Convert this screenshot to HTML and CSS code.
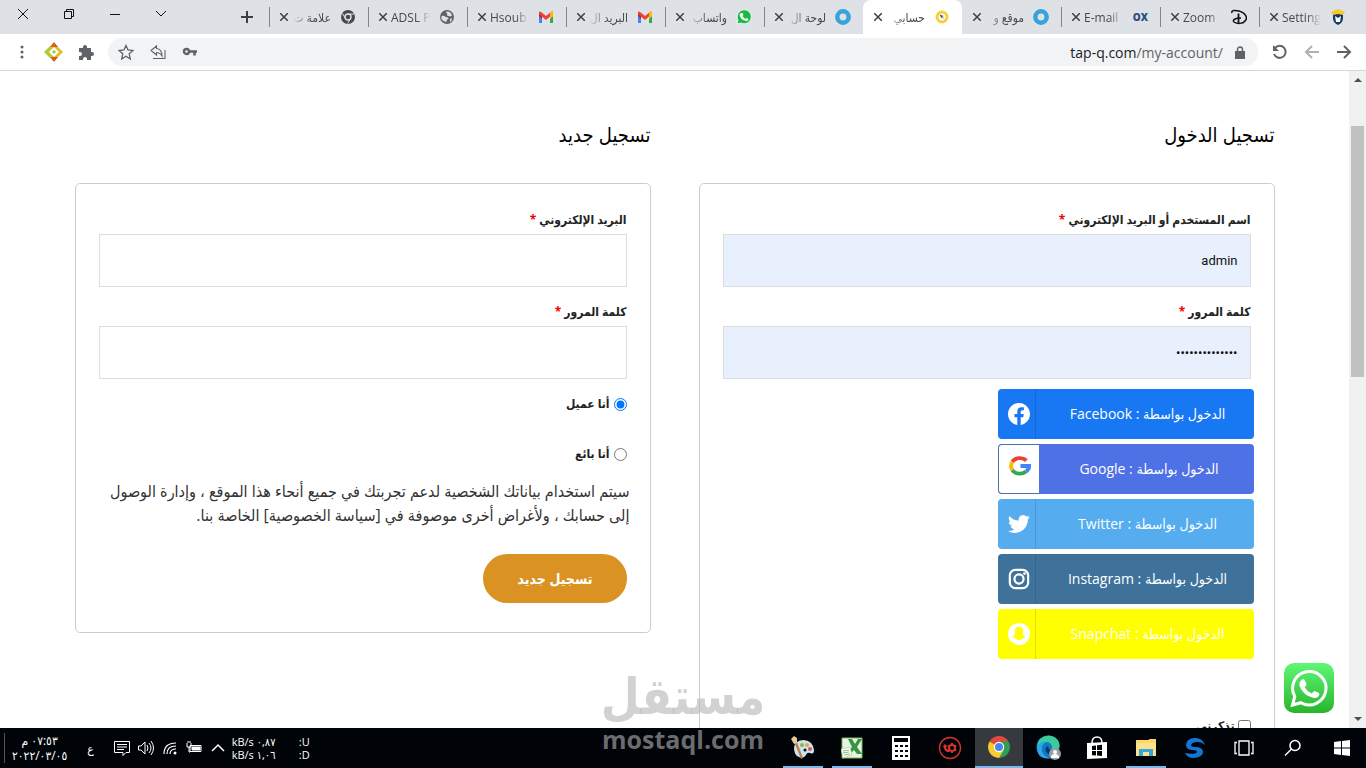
FILE: index.html
```html
<!DOCTYPE html>
<html lang="ar" dir="rtl">
  <head>
    <meta charset="utf-8">
    <title>حسابي</title>
    <link rel="stylesheet" href="styles.css">
  </head>
  <body>
    <div class="tabs">
      <div class="tab">
        <svg class="favicon" viewBox="0 0 16 16"><path d="M3 4h10v5q0 5-5 7q-5-2-5-7z" fill="#143a66"/><path d="M5 7l3 2 3-2-1 6H6z" fill="#fff"/><path d="M1 3l7-3 7 3-2 3-5-1-5 1z" fill="#f5c82d"/></svg>
        <span class="title" dir="ltr">Setting</span>
        <button class="close" aria-label="إغلاق"><svg viewBox="0 0 8 8"><path d="M0 0l8 8M8 0L0 8"/></svg></button>
      </div>
      <div class="tab">
        <svg class="favicon" viewBox="0 0 16 16" fill="none" stroke="#111"><path d="M1 4C0 1 4 1 8 2c7 2 9 7 6 10-2 3-8 3-11 1-2-2 1-4 7-4" stroke-width="1.500"/><path d="M7.500 4.500V15" stroke-width="1.800"/></svg>
        <span class="title" dir="ltr">Zoom</span>
        <button class="close" aria-label="إغلاق"><svg viewBox="0 0 8 8"><path d="M0 0l8 8M8 0L0 8"/></svg></button>
      </div>
      <div class="tab">
        <span class="favicon ox">OX</span>
        <span class="title" dir="ltr">E-mail</span>
        <button class="close" aria-label="إغلاق"><svg viewBox="0 0 8 8"><path d="M0 0l8 8M8 0L0 8"/></svg></button>
      </div>
      <div class="tab last">
        <svg class="favicon" viewBox="0 0 16 16"><circle cx="8" cy="8" r="5.700" fill="none" stroke="#36a3dd" stroke-width="4.500"/></svg>
        <span class="title">موقع و</span>
        <button class="close" aria-label="إغلاق"><svg viewBox="0 0 8 8"><path d="M0 0l8 8M8 0L0 8"/></svg></button>
      </div>
      <div class="tab active">
        <svg class="favicon" viewBox="0 0 16 16"><circle cx="8" cy="8" r="5" fill="#fff" stroke="#f7d038" stroke-width="3"/><path d="M5.500 5.500l2 4 .5-1.500 3 3-2.500-3.500 1.500-.5z" fill="#555"/></svg>
        <span class="title">حسابي</span>
        <button class="close" aria-label="إغلاق"><svg viewBox="0 0 8 8"><path d="M0 0l8 8M8 0L0 8"/></svg></button>
      </div>
      <div class="tab">
        <svg class="favicon" viewBox="0 0 16 16"><circle cx="8" cy="8" r="5.700" fill="none" stroke="#36a3dd" stroke-width="4.500"/></svg>
        <span class="title">لوحة ال</span>
        <button class="close" aria-label="إغلاق"><svg viewBox="0 0 8 8"><path d="M0 0l8 8M8 0L0 8"/></svg></button>
      </div>
      <div class="tab">
        <svg class="favicon" viewBox="0 0 16 16"><path d="M1 15l1-4a7 7 0 1 1 3 3z" fill="#19b943" stroke="#fff" stroke-width=".8"/><path d="M5 4l1.500 0 1 2-1 1q1 2 3 3l1-1 2 1q0 2-2 2-6-1-7-6 0-1 1.500-2z" fill="#fff"/></svg>
        <span class="title">واتساب</span>
        <button class="close" aria-label="إغلاق"><svg viewBox="0 0 8 8"><path d="M0 0l8 8M8 0L0 8"/></svg></button>
      </div>
      <div class="tab">
        <svg class="favicon" viewBox="0 0 16 16"><path d="M1 4v10h3V6z" fill="#4285f4"/><path d="M15 4v10h-3V6z" fill="#34a853"/><path d="M1 4l3 3v3L1 7z" fill="#c5221f"/><path d="M12 6l3-2v3l-3 3z" fill="#fbbc04"/><path d="M1 3q1-1 2 0l5 4 5-4q1-1 2 0v2l-7 6-7-6z" fill="#ea4335"/><path d="M12 4l1-1q2-1 2 1v3l-3 2z" fill="#fbbc04"/></svg>
        <span class="title">البريد ال</span>
        <button class="close" aria-label="إغلاق"><svg viewBox="0 0 8 8"><path d="M0 0l8 8M8 0L0 8"/></svg></button>
      </div>
      <div class="tab">
        <svg class="favicon" viewBox="0 0 16 16"><path d="M1 4v10h3V6z" fill="#4285f4"/><path d="M15 4v10h-3V6z" fill="#34a853"/><path d="M1 4l3 3v3L1 7z" fill="#c5221f"/><path d="M12 6l3-2v3l-3 3z" fill="#fbbc04"/><path d="M1 3q1-1 2 0l5 4 5-4q1-1 2 0v2l-7 6-7-6z" fill="#ea4335"/><path d="M12 4l1-1q2-1 2 1v3l-3 2z" fill="#fbbc04"/></svg>
        <span class="title" dir="ltr">Hsoub</span>
        <button class="close" aria-label="إغلاق"><svg viewBox="0 0 8 8"><path d="M0 0l8 8M8 0L0 8"/></svg></button>
      </div>
      <div class="tab">
        <svg class="favicon" viewBox="0 0 16 16"><circle cx="8" cy="8" r="7" fill="#5f6368"/><path d="M2.500 7q3-1 4 1 3 0 3 2-2 0-2 3-3 0-5-3zM8 2.500q4 0 5 4l-2 1-3-1q1-2-1-3zM11 10l2-1q0 3-2 4z" fill="#dee1e6"/></svg>
        <span class="title" dir="ltr">ADSL P</span>
        <button class="close" aria-label="إغلاق"><svg viewBox="0 0 8 8"><path d="M0 0l8 8M8 0L0 8"/></svg></button>
      </div>
      <div class="tab">
        <svg class="favicon" viewBox="0 0 16 16"><circle cx="8" cy="8" r="7" fill="#45494d"/><circle cx="8" cy="8" r="3" fill="#45494d" stroke="#dee1e6" stroke-width="1.400"/><path d="M8 5h6M5.400 9.500L2.500 4.500M10.600 9.500L7.700 14.500" stroke="#dee1e6"/></svg>
        <span class="title">علامة ت</span>
        <button class="close" aria-label="إغلاق"><svg viewBox="0 0 8 8"><path d="M0 0l8 8M8 0L0 8"/></svg></button>
      </div>
      <button class="new-tab" aria-label="علامة تبويب جديدة"><svg width="12" height="12" viewBox="0 0 12 12"><path d="M6 0v12M0 6h12" stroke="#3c4043" stroke-width="2"/></svg></button>
      <div class="window-buttons">
        <button aria-label="بحث"><svg width="12" height="12" viewBox="0 0 12 12"><path d="M1 3l5 5 5-5"/></svg></button>
        <button aria-label="تصغير"><svg width="12" height="12" viewBox="0 0 12 12"><path d="M1 6.500h10"/></svg></button>
        <button aria-label="استعادة"><svg width="12" height="12" viewBox="0 0 12 12"><path d="M1.500 3.500h7v7h-7zM3.500 3.500v-2h7v7h-2"/></svg></button>
        <button aria-label="إغلاق"><svg width="12" height="12" viewBox="0 0 12 12"><path d="M1 1l10 10M11 1L1 11"/></svg></button>
      </div>
    </div>

    <div class="toolbar">
      <button aria-label="رجوع"><svg width="16" height="16" viewBox="0 0 16 16"><path d="M1 8h13M8 2l6 6-6 6"/></svg></button>
      <button aria-label="تقدم" class="off"><svg width="16" height="16" viewBox="0 0 16 16"><path d="M15 8H2M8 2L2 8l6 6"/></svg></button>
      <button aria-label="تحديث"><svg width="16" height="16" viewBox="0 0 16 16"><path d="M3 4a6 6 0 1 1-1 6"/><path d="M1 1v6h6z" fill="#5f6368" stroke="none"/></svg></button>
      <div class="omnibox">
        <svg width="10" height="13" viewBox="0 0 10 13"><path d="M0 5h10v8H0z" fill="#5f6368"/><path d="M2.500 5V3.500a2.500 2.500 0 0 1 5 0V5" fill="none" stroke="#5f6368" stroke-width="1.500"/></svg>
        <span class="url" dir="ltr">tap-q.com<span>/my-account/</span></span>
        <button aria-label="كلمة المرور"><svg width="16" height="16" viewBox="0 0 16 16"><circle cx="4.500" cy="7.500" r="2.500" stroke-width="2.400"/><path d="M7 7.500h8M12.500 8v3.500" stroke-width="2.600"/></svg></button>
        <button aria-label="مشاركة"><svg width="16" height="16" viewBox="0 0 16 16"><path d="M1 6.500L6.500 2v2.500Q12 5 12 12 10 8.500 6.500 8.500V11zM3 14.500h12V6" stroke-width="1.100"/></svg></button>
        <button aria-label="إشارة مرجعية"><svg width="16" height="16" viewBox="0 0 16 16"><path d="M8 1.500l2 4.500 5 .5-3.800 3.300L12.300 15 8 12.300 3.700 15l1.100-5.200L1 6.500 6 6z" stroke-width="1.300"/></svg></button>
      </div>
      <button aria-label="الإضافات"><svg width="16" height="16" viewBox="0 0 16 16"><path d="M1 4h4V3a2 2 0 0 1 4 0v1h4v4h1a2 2 0 0 1 0 4h-1v4H9v-1a2 2 0 0 0-4 0v1H1v-4h1a2 2 0 0 0 0-4H1z" fill="#5f6368" stroke="none"/></svg></button>
      <button aria-label="إضافة"><svg width="20" height="20" viewBox="0 0 20 20"><g stroke="none"><path d="M10 1l9 9-9 9-9-9z" fill="#e2ba2e"/><path d="M10 0l4 5H6zM10 20l4-5H6z" fill="#d0601f"/><path d="M0 10l6-6 1 3-3 3 3 3-1 3z" fill="#a4d13a"/><path d="M10 5l5 5-5 5-5-5z" fill="#fff"/><path d="M8 10q2-4 4 0l-2 2z" fill="#a4d13a"/></g></svg></button>
      <button aria-label="القائمة"><svg width="16" height="16" viewBox="0 0 16 16"><g fill="#5f6368" stroke="none"><circle cx="8" cy="3" r="1.500"/><circle cx="8" cy="8" r="1.500"/><circle cx="8" cy="13" r="1.500"/></g></svg></button>
    </div>

    <div class="page">
      <div class="scrollbar"><i class="up"></i><div class="thumb"></div><i class="down"></i></div>
      <main>
        <div class="columns">
          <section>
            <h2>تسجيل الدخول</h2>
            <form class="card">
              <div class="field">
                <label for="user">اسم المستخدم أو البريد الإلكتروني <em>*</em></label>
                <input id="user" class="filled" type="text" value="admin">
              </div>
              <div class="field">
                <label for="pass">كلمة المرور <em>*</em></label>
                <input id="pass" class="filled" type="password" value="12345678901234">
              </div>
              <div class="social">
                <a href="#" class="facebook">
                  <span class="name">الدخول بواسطة : Facebook</span>
                  <span class="icon"><svg viewBox="0 0 24 24"><path fill="#fff" d="M24 12.070C24 5.400 18.630 0 12 0S0 5.400 0 12.070C0 18.100 4.390 23.090 10.130 24v-8.440H7.080v-3.490h3.050V9.410c0-3.020 1.790-4.690 4.530-4.690 1.310 0 2.690.24 2.690.24v2.970h-1.520c-1.490 0-1.960.93-1.960 1.890v2.250h3.330l-.53 3.490h-2.800V24C19.610 23.090 24 18.100 24 12.070z"/></svg></span>
                </a>
                <a href="#" class="google">
                  <span class="name">الدخول بواسطة : Google</span>
                  <span class="icon"><svg viewBox="0 0 24 24"><g fill="none" stroke-width="4.200"><path d="M3.600 7.500A9.500 8 0 0 1 19 6" stroke="#ea4335"/><path d="M3.600 16.500a9 9 0 0 1 0-9" stroke="#fbbc05"/><path d="M3.600 16.500A9.500 8 0 0 0 18.500 18" stroke="#34a853"/><path d="M12.500 12H22q0 4-3.500 6" stroke="#4285f4"/></g></svg></span>
                </a>
                <a href="#" class="twitter">
                  <span class="name">الدخول بواسطة : Twitter</span>
                  <span class="icon"><svg viewBox="0 0 24 24"><path fill="#fff" d="M23.950 4.570a10 10 0 0 1-2.820.77 4.960 4.960 0 0 0 2.160-2.720c-.95.56-2 .96-3.120 1.180a4.920 4.920 0 0 0-8.390 4.490C7.690 8.100 4.070 6.130 1.640 3.160a4.920 4.920 0 0 0 1.520 6.570 4.900 4.900 0 0 1-2.230-.61v.06a4.920 4.920 0 0 0 3.950 4.830 5 5 0 0 1-2.210.08 4.940 4.940 0 0 0 4.600 3.420A9.870 9.870 0 0 1 0 19.540a14 14 0 0 0 7.550 2.210c9.050 0 14-7.500 14-13.980 0-.21 0-.42-.02-.63a9.940 9.940 0 0 0 2.460-2.550z"/></svg></span>
                </a>
                <a href="#" class="instagram">
                  <span class="name">الدخول بواسطة : Instagram</span>
                  <span class="icon"><svg viewBox="0 0 24 24"><g fill="none" stroke="#fff" stroke-width="2.400"><rect x="2" y="2" width="20" height="20" rx="6"/><circle cx="12" cy="12" r="5"/></g><circle cx="18" cy="6" r="1.500" fill="#fff"/></svg></span>
                </a>
                <a href="#" class="snapchat">
                  <span class="name">الدخول بواسطة : Snapchat</span>
                  <span class="icon"><svg viewBox="0 0 24 24"><circle cx="12" cy="12" r="12" fill="#fff"/><path d="M12 4c3 0 4.500 2 4.500 5v2c0 2 1 3.500 2.500 4.500-1 1-2 1-2.500 1.500-1 0-1.500.5-2 1-1.500 1-3.500 1-5 0-.5-.5-1-1-2-1-.5-.5-1.500-.5-2.500-1.500C6.500 14.500 7.500 13 7.500 11V9c0-3 1.500-5 4.500-5z" fill="#ff0"/></svg></span>
                </a>
              </div>
              <label class="remember"><input type="checkbox"> تذكرني</label>
            </form>
          </section>

          <section>
            <h2>تسجيل جديد</h2>
            <form class="card">
              <div class="field">
                <label for="reg-email">البريد الإلكتروني <em>*</em></label>
                <input id="reg-email" type="email">
              </div>
              <div class="field">
                <label for="reg-pass">كلمة المرور <em>*</em></label>
                <input id="reg-pass" type="password">
              </div>
              <div class="roles">
                <label><input type="radio" name="role" checked> أنا عميل</label>
                <label><input type="radio" name="role"> أنا بائع</label>
              </div>
              <p class="privacy">سيتم استخدام بياناتك الشخصية لدعم تجربتك في جميع أنحاء هذا الموقع ، وإدارة الوصول إلى حسابك ، ولأغراض أخرى موصوفة في [سياسة الخصوصية] الخاصة بنا.</p>
              <button type="button" class="register">تسجيل جديد</button>
            </form>
          </section>
        </div>
      </main>
      <a href="#" class="whatsapp" aria-label="واتساب"><svg width="50" height="50" viewBox="0 0 50 50"><defs><linearGradient id="wa" x2="0" y2="1"><stop stop-color="#5ff777"/><stop offset="1" stop-color="#28b52c"/></linearGradient></defs><rect width="50" height="50" rx="10" fill="url(#wa)"/><path d="M8.500 42l2.300-8.500A16.700 16.700 0 1 1 17 39.700z" fill="none" stroke="#fff" stroke-width="3"/><path d="M18 16.500q1.500-1 2.500.2l2 4.300q.4 1-1.800 3.200 2.500 4.500 7 6.300 2.300-2.800 3-2.500l4.300 2q1 .8 0 2.800-2 3-6 2-10-2.500-13.500-12-.5-4 2.500-6.300z" fill="#fff"/></svg></a>
    </div>

    <div class="taskbar">
      <div class="apps">
        <button aria-label="ابدأ"><svg width="16" height="16" viewBox="0 0 16 16" fill="#fff"><path d="M0 2l7-1v6.500H0zM8 1l8-1v7.500H8zM0 8.500h7V15l-7-1zM8 8.500h8V16l-8-1z"/></svg></button>
        <button aria-label="بحث"><svg width="18" height="18" viewBox="0 0 18 18" fill="none" stroke="#fff" stroke-width="1.500"><circle cx="11" cy="6.500" r="5"/><path d="M7.500 10L1 16.500"/></svg></button>
        <button aria-label="عرض المهام"><svg width="20" height="16" viewBox="0 0 20 16" fill="none" stroke="#fff" stroke-width="1.300"><path d="M5 1h10v14H5zM3 2.500H1v11h2M17 2.500h2v11h-2"/></svg></button>
        <button aria-label="S"><svg width="22" height="22" viewBox="0 0 22 22"><path d="M21 8Q18 0 10 1 2 2 2 8q0 5 7 5 4 0 4 2-1 3-12 1 2 5 9 5 9-1 9-6 0-5-8-5-4 0-4-2 1-3 7-3 4 0 7 3z" fill="#1176d8"/></svg></button>
        <button aria-label="مستكشف الملفات" class="open"><svg width="22" height="20" viewBox="0 0 22 20"><path d="M1 2h12l2-1h6v17H1z" fill="#fbd66d"/><path d="M1 5h20v13H1z" fill="#fce18d"/><path d="M4 18v-7h14v7h-4v-4H8v4z" fill="#35a7dc"/></svg></button>
        <button aria-label="المتجر"><svg width="22" height="24" viewBox="0 0 22 24"><path d="M6 7q0-6 5-6t5 6" fill="none" stroke="#fff" stroke-width="1.500"/><path d="M1 7l20-1v16L1 23z" fill="#fff"/><path d="M6 10l4-.5V14H6zM11 9.300l5-.5V14h-5zM6 15h4v4.500l-4-.3zM11 15h5v5l-5-.4z" fill="#000308"/></svg></button>
        <button aria-label="Edge"><svg width="26" height="26" viewBox="0 0 26 26"><circle cx="13" cy="12" r="11.500" fill="#1474c8"/><path d="M2 12Q3 1 14 .5 25 2 24.500 12q-3 5-8 3 2-8-6-8Q4 8 2 12z" fill="#3acb9c"/><path d="M2 12q3-6 9-5-5 3-4 9 2 6 8 7Q2 25 2 12z" fill="#2aa9e0"/><path d="M12 11q-4 6 3 9l8-1-8-4z" fill="#0b3767"/><circle cx="20" cy="19" r="6" fill="#9a9ca0"/><circle cx="20" cy="17" r="2" fill="#fff"/><path d="M16 23q0-4 4-4t4 4z" fill="#fff"/></svg></button>
        <button aria-label="Chrome" class="current"><svg width="22" height="22" viewBox="0 0 22 22"><path d="M11 11L1.500 5.500a11 11 0 0 1 19 0z" fill="#e04a3c"/><path d="M11 11V5.500h9.500A11 11 0 0 1 11 22z" fill="#2f9f55"/><path d="M11 11l4.800 2.700L11 22A11 11 0 0 1 1.500 5.500z" fill="#f8cb2f"/><circle cx="11" cy="11" r="5.200" fill="#fff"/><circle cx="11" cy="11" r="4" fill="#4c84ec"/></svg></button>
        <button aria-label="الإعدادات"><svg width="24" height="24" viewBox="0 0 24 24" fill="none" stroke="#d8322c"><circle cx="12" cy="12" r="10.500" stroke-width="1.300"/><circle cx="14" cy="12" r="3" stroke-width="2"/><path d="M14 7v2M14 15v2M9.700 9.500l1.700 1M16.600 13.500l1.700 1M9.700 14.500l1.700-1M16.600 10.500l1.700-1" stroke-width="2"/><path d="M5 10l2-2 2 2-1 2 4 4H9q-3-2-4-6z" fill="#d8322c" stroke="none"/></svg></button>
        <button aria-label="الحاسبة"><svg width="18" height="24" viewBox="0 0 18 24"><path d="M0 0h18v24H0z" fill="#fff"/><path d="M2 2h14v4H2zM3 9h3v2H3zM8 9h3v2H8zM13 9h3v2h-3zM3 14h3v2H3zM8 14h3v2H8zM13 14h3v2h-3zM3 19h3v2H3zM8 19h3v2H8zM13 19h3v2h-3z" fill="#000308"/></svg></button>
        <button aria-label="Excel" class="open"><svg width="22" height="22" viewBox="0 0 22 22"><path d="M1 1h20v20H1z" fill="#e9f5e1" stroke="#77b765"/><path d="M7 2h4l3 5 3-5h4l-5 8 5 7h-5l-3-4-4 4H6l5-7z" fill="#35963d"/><path d="M0 12l9-2 2 8-9 3z" fill="#fff" stroke="#aac5a0" stroke-width=".7"/><path d="M2 14l6-1M2 16l6-1M3 18l6-1" stroke="#88b97b"/></svg></button>
        <button aria-label="الرسام" class="open"><svg width="24" height="24" viewBox="0 0 24 24"><path d="M3 12q1-8 10-8 9 1 10 10 0 5-4 3-3-1-4 2-3 5-9 1-3-3-3-8z" fill="#c9e3f2"/><circle cx="11" cy="9" r="2" fill="#89b940"/><circle cx="16" cy="9" r="2" fill="#e9a735"/><circle cx="19" cy="13" r="2" fill="#dc5549"/><circle cx="14" cy="14" r="1.500" fill="#111"/><path d="M2 3l4 3 6 16-2 1z" fill="#c7803e"/><path d="M0 3l3-3 3 2v5L3 8z" fill="#e8c79d"/></svg></button>
      </div>
      <div class="net">
        <table>
          <tr><td>U:</td><td dir="ltr">kB/s ٠,٨٧</td></tr>
          <tr><td>D:</td><td dir="ltr">kB/s ١,٠٦</td></tr>
        </table>
      </div>
      <div class="tray">
        <svg viewBox="0 0 16 16"><path d="M2 11l6-6 6 6" stroke-width="1.500"/></svg>
        <svg viewBox="0 0 16 16"><path d="M4 5.500h11v6H4z"/><path d="M6 7h8v3H6z" fill="#fff"/><path d="M1 3v4h4V3M3 7v5h1M2 3V1M4 3V1"/></svg>
        <svg viewBox="0 0 16 16"><circle cx="13" cy="13" r="1.500" fill="#fff" stroke="none"/><path d="M2 14Q2 3 14 3M5 14q0-8 9-8M8 14q0-5 6-5" stroke-width="1.200"/></svg>
        <svg viewBox="0 0 16 16"><path d="M.5 6H3l4-4v12l-4-4H.5zM9 5q2 3 0 6M11 3q4 5 0 10M13 1q5 7 0 14"/></svg>
        <svg viewBox="0 0 16 16"><path d="M.5 1.500h15v11H12l-3 3v-3H.5zM3 4.500h10M3 7h10M3 9.500h7"/></svg>
      </div>
      <div class="lang">ع</div>
      <div class="clock"><span>٠٧:٥٣ م</span><span dir="ltr">٢٠٢٢/٠٣/٠٥</span></div>
    </div>

    <div class="watermark">
      <strong>مستقل</strong>
      <span dir="ltr">mostaql.com</span>
    </div>
  </body>
</html>
```
FILE: styles.css
```css
* {
  box-sizing: border-box;
}
body {
  margin: 0;
  height: 100vh;
  display: flex;
  flex-direction: column;
  overflow: hidden;
  background: #fff;
  font-family: "Open Sans", "DejaVu Sans Condensed", sans-serif;
  font-size: 12px;
  color: #222;
}
button {
  border: none;
  background: none;
  padding: 0;
  font-family: inherit;
}
svg {
  display: block;
  flex: none;
}

/* tabs */
.tabs {
  height: 34px;
  flex: none;
  display: flex;
  padding-right: 8px;
  background: #dee1e6;
}
.tab {
  width: 99px;
  display: flex;
  align-items: center;
  padding: 0 12px 0 11px;
  position: relative;
  color: #45494d;
}
.tab::after {
  content: "";
  position: absolute;
  left: 0;
  top: 7px;
  width: 1px;
  height: 20px;
  background: #80868b;
}
.tab.active::after,
.tab.last::after {
  display: none;
}
.tab.active {
  background: #fff;
  border-radius: 8px 8px 0 0;
}
.favicon {
  width: 16px;
  height: 16px;
  flex: none;
}
.ox {
  font-size: 10px;
  line-height: 16px;
  font-weight: 800;
  color: #2a5080;
}
.title {
  flex: 1;
  margin: 0 9px 0 4px;
  overflow: hidden;
  white-space: nowrap;
  -webkit-mask-image: linear-gradient(to right, transparent, #000 20px);
  mask-image: linear-gradient(to right, transparent, #000 20px);
}
.title[dir="ltr"] {
  -webkit-mask-image: linear-gradient(to left, transparent, #000 14px);
  mask-image: linear-gradient(to left, transparent, #000 14px);
}
.close svg {
  width: 8px;
  height: 8px;
  stroke: #3c4043;
  stroke-width: 1.5;
}
.new-tab {
  width: 44px;
  display: flex;
  align-items: center;
  justify-content: center;
}
.window-buttons {
  display: flex;
  margin-right: auto;
  height: 28px;
}
.window-buttons button {
  width: 46px;
  display: flex;
  align-items: center;
  justify-content: center;
}
.window-buttons svg {
  fill: none;
  stroke: #111;
}

/* toolbar */
.toolbar {
  height: 37px;
  flex: none;
  display: flex;
  align-items: center;
  padding: 0 6px;
  border-bottom: 1px solid #d5d7da;
}
.toolbar button {
  width: 32px;
  height: 28px;
  display: flex;
  align-items: center;
  justify-content: center;
}
.toolbar button svg {
  fill: none;
  stroke: #5f6368;
  stroke-width: 2;
}
.toolbar .off {
  opacity: 0.5;
}
.omnibox {
  flex: 1;
  height: 28px;
  margin: 0 6px;
  padding: 0 13px 0 2px;
  display: flex;
  align-items: center;
  border-radius: 14px;
  background: #f1f3f4;
}
.url {
  margin: 0 12px 0 auto;
  font-size: 14px;
  color: #202124;
}
.url span {
  color: #5f6368;
}

/* page */
.page {
  flex: 1;
  min-height: 0;
  display: flex;
  overflow: hidden;
  position: relative;
}
.scrollbar {
  width: 17px;
  flex: none;
  display: flex;
  flex-direction: column;
  align-items: center;
  padding: 7px 0;
  background: #f1f1f1;
}
.scrollbar i {
  border: 4px solid transparent;
}
.scrollbar .up {
  border-top: 0;
  border-bottom-color: #505050;
}
.scrollbar .down {
  margin-top: auto;
  border-bottom: 0;
  border-top-color: #505050;
}
.thumb {
  width: 13px;
  height: 39%;
  margin-top: 44px;
  background: #c1c1c1;
}
main {
  flex: 1;
}
.columns {
  max-width: 1200px;
  margin: 0 auto;
  padding-top: 46px;
  display: grid;
  grid-template-columns: 1fr 1fr;
  gap: 48px;
  align-items: start;
}
h2 {
  margin: 0 0 30px;
  font-size: 20px;
  line-height: 36px;
  font-weight: normal;
  color: #000;
}
.card {
  border: 1px solid #ccc;
  border-radius: 5px;
  padding: 21px 23px 29px;
}
.field {
  margin-bottom: 10px;
}
.field label {
  display: block;
  line-height: 29px;
}
label {
  font-size: 12px;
  font-weight: bold;
}
em {
  color: #e00;
  font-style: normal;
}
.field input {
  display: block;
  width: 100%;
  height: 53px;
  padding: 0 12px;
  border: 1px solid #ddd;
  background: #fff;
  font-family: Roboto, sans-serif;
  font-size: 13px;
  color: #111;
}
.field .filled {
  background: #e8f0fe;
}
.social {
  width: 256px;
  margin-right: -3px;
  display: flex;
  flex-direction: column;
  gap: 5px;
}
.social a {
  height: 50px;
  display: flex;
  border-radius: 4px;
  overflow: hidden;
  color: #fff;
  font-size: 14px;
  font-weight: 500;
  text-decoration: none;
}
.name {
  flex: 1;
  line-height: 50px;
  padding-left: 6px;
  text-align: center;
}
.icon {
  width: 38px;
  display: flex;
  align-items: center;
  justify-content: center;
  border-right: 1px solid rgba(0, 0, 0, 0.12);
  padding-left: 6px;
}
.icon svg {
  width: 22px;
  height: 22px;
}
.facebook {
  background: #1877f2;
}
.google {
  background: #4f71e6;
}
.google .icon {
  width: 41px;
  background: #fff;
  border: 1px solid #4a70b0;
  border-right: 0;
  border-radius: 4px 0 0 4px;
  padding: 0 0 6px 2px;
}
.twitter {
  background: #55acee;
}
.instagram {
  background: #3f729b;
}
.snapchat {
  background: #ff0;
}
.remember {
  display: flex;
  align-items: center;
  gap: 3px;
  margin-top: 52px;
  line-height: 30px;
}
input[type="radio"],
input[type="checkbox"] {
  width: 13px;
  height: 13px;
  margin: 0;
}
.roles {
  display: flex;
  flex-direction: column;
  gap: 20px;
}
.roles label {
  display: flex;
  align-items: center;
  gap: 4px;
  line-height: 30px;
}
.privacy {
  margin: 10px -3px 27px 0;
  font-size: 16px;
  line-height: 24px;
  color: #333;
}
.register {
  display: block;
  height: 49px;
  padding: 0 34px;
  border-radius: 25px;
  background: #da9323;
  color: #fff;
  font-size: 14px;
  font-weight: bold;
}
.whatsapp {
  position: absolute;
  left: 1284px;
  bottom: 15px;
}

/* taskbar */
.taskbar {
  height: 40px;
  flex: none;
  display: flex;
  align-items: center;
  background: #000308;
  color: #fff;
}
.apps {
  display: flex;
  height: 40px;
  gap: 1px;
}
.apps button {
  width: 48px;
  display: flex;
  align-items: center;
  justify-content: center;
}
.open {
  background: linear-gradient(#76b9ed, #76b9ed) center bottom / 40px 2px no-repeat;
}
.current {
  background: #36393d;
  border-bottom: 2px solid #76b9ed;
}
.net {
  margin-right: auto;
}
.net table {
  border-spacing: 0;
  font-size: 11px;
  line-height: 13px;
}
.net td {
  padding: 0;
  width: 32px;
}
.net td:last-child {
  width: 46px;
  white-space: nowrap;
  text-align: left;
}
.tray {
  display: flex;
  gap: 8px;
  margin-right: 6px;
}
.tray svg {
  width: 16px;
  height: 16px;
  fill: none;
  stroke: #fff;
}
.lang {
  margin: 0 20px;
  font-size: 12px;
}
.clock {
  display: flex;
  flex-direction: column;
  align-items: center;
  margin-left: 4px;
  padding-left: 7px;
  border-left: 1px solid #555;
  font-size: 12px;
  line-height: 15px;
}

/* watermark over the page and the taskbar */
.watermark {
  position: absolute;
  left: 601px;
  bottom: 12px;
  width: 164px;
  display: flex;
  flex-direction: column;
  align-items: center;
  color: rgba(180, 180, 180, 0.6);
  font-size: 25px;
  line-height: 34px;
  font-weight: bold;
}
.watermark strong {
  font-size: 50px;
  line-height: 54px;
}
```
